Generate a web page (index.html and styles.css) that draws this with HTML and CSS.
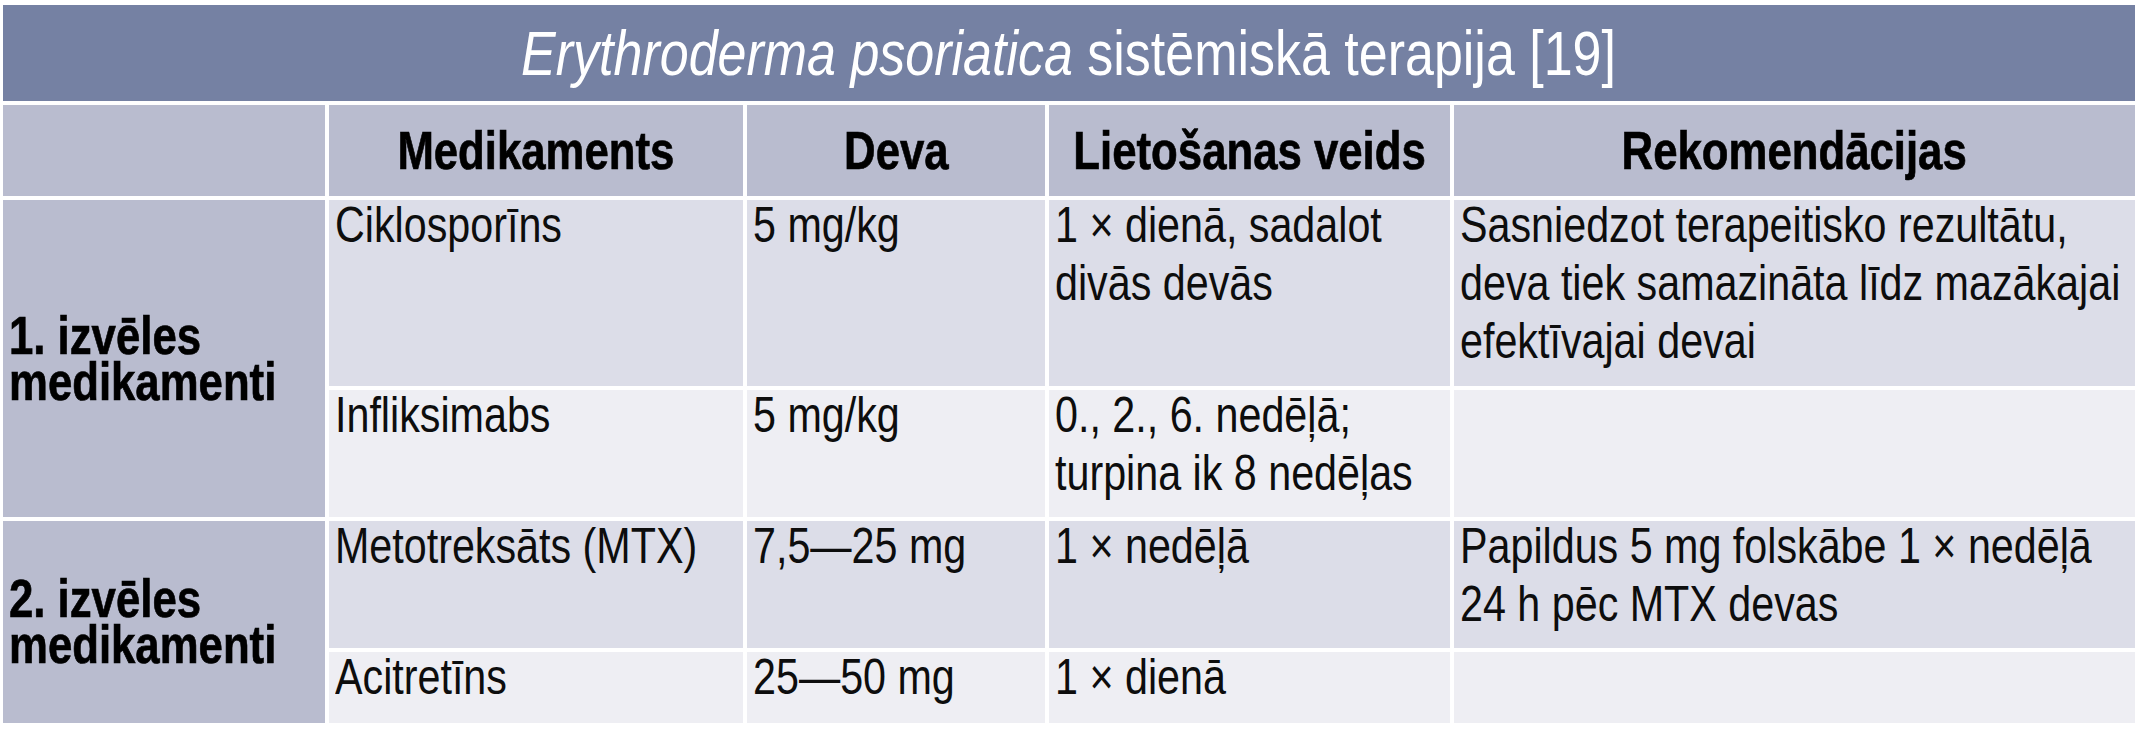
FILE: index.html
```html
<!DOCTYPE html>
<html lang="lv">
<head>
<meta charset="utf-8">
<title>Erythroderma psoriatica sistēmiskā terapija</title>
<link rel="stylesheet" href="styles.css">
</head>
<body>
<div class="table">
  <div class="title"><span class="cond"><em>Erythroderma psoriatica</em> sistēmiskā terapija [19]</span></div>

  <div class="head"></div>
  <div class="head"><span class="cond">Medikaments</span></div>
  <div class="head"><span class="cond">Deva</span></div>
  <div class="head"><span class="cond">Lietošanas veids</span></div>
  <div class="head"><span class="cond">Rekomendācijas</span></div>

  <div class="group"><span class="cond"><span class="gline">1. izvēles</span><span class="gline">medikamenti</span></span></div>
  <div class="cell dark"><span class="txt">Ciklosporīns</span></div>
  <div class="cell dark"><span class="txt">5 mg/kg</span></div>
  <div class="cell dark"><span class="txt">1 × dienā, sadalot<br>divās devās</span></div>
  <div class="cell dark"><span class="txt">Sasniedzot terapeitisko rezultātu,<br>deva tiek samazināta līdz mazākajai<br>efektīvajai devai</span></div>

  <div class="cell light"><span class="txt">Infliksimabs</span></div>
  <div class="cell light"><span class="txt">5 mg/kg</span></div>
  <div class="cell light"><span class="txt">0., 2., 6. nedēļā;<br>turpina ik 8 nedēļas</span></div>
  <div class="cell light"></div>

  <div class="group"><span class="cond"><span class="gline">2. izvēles</span><span class="gline">medikamenti</span></span></div>
  <div class="cell dark"><span class="txt">Metotreksāts (MTX)</span></div>
  <div class="cell dark"><span class="txt">7,5—25 mg</span></div>
  <div class="cell dark"><span class="txt">1 × nedēļā</span></div>
  <div class="cell dark"><span class="txt">Papildus 5 mg folskābe 1 × nedēļā<br>24 h pēc MTX devas</span></div>

  <div class="cell light"><span class="txt">Acitretīns</span></div>
  <div class="cell light"><span class="txt">25—50 mg</span></div>
  <div class="cell light"><span class="txt">1 × dienā</span></div>
  <div class="cell light"></div>
</div>
</body>
</html>
```
FILE: styles.css
```css
html, body {
  margin: 0;
  padding: 0;
  background: #ffffff;
}

.table {
  display: grid;
  grid-template-columns: 322px 414px 298px 401px 681px;
  grid-template-rows: 96px 91px 186px 127px 127px 71px;
  gap: 4px;
  padding: 5px 0 0 3px;
  font-family: "Liberation Sans", Arial, sans-serif;
  color: #0d0d0d;
}

/* condensed look: Liberation Sans squeezed horizontally */
.cond,
.txt {
  display: inline-block;
  white-space: nowrap;
  transform: scaleX(0.825);
}

.cond {
  transform-origin: 50% 50%;
}

.txt {
  display: block;
  transform-origin: 0 0;
  margin-top: -4px;
}

.title {
  grid-column: 1 / 6;
  background: #7581a3;
  color: #ffffff;
  font-size: 63px;
  display: flex;
  align-items: center;
  justify-content: center;
}

.title em {
  font-style: italic;
}

.head {
  background: #b9bccf;
  font-weight: bold;
  font-size: 53px;
  display: flex;
  align-items: center;
  justify-content: center;
  color: #000000;
  -webkit-text-stroke: 0.7px #000000;
}

.group {
  grid-row: span 2;
  background: #b9bccf;
  font-weight: bold;
  font-size: 53px;
  line-height: 46px;
  display: flex;
  align-items: center;
  padding-left: 6px;
  color: #000000;
  -webkit-text-stroke: 0.7px #000000;
}

.group .cond {
  transform-origin: 0 50%;
}

.gline {
  display: block;
}

.cell {
  font-size: 50px;
  line-height: 58px;
  padding: 0 6px;
}

.dark {
  background: #dcdde8;
}

.light {
  background: #eeeef3;
}
```
